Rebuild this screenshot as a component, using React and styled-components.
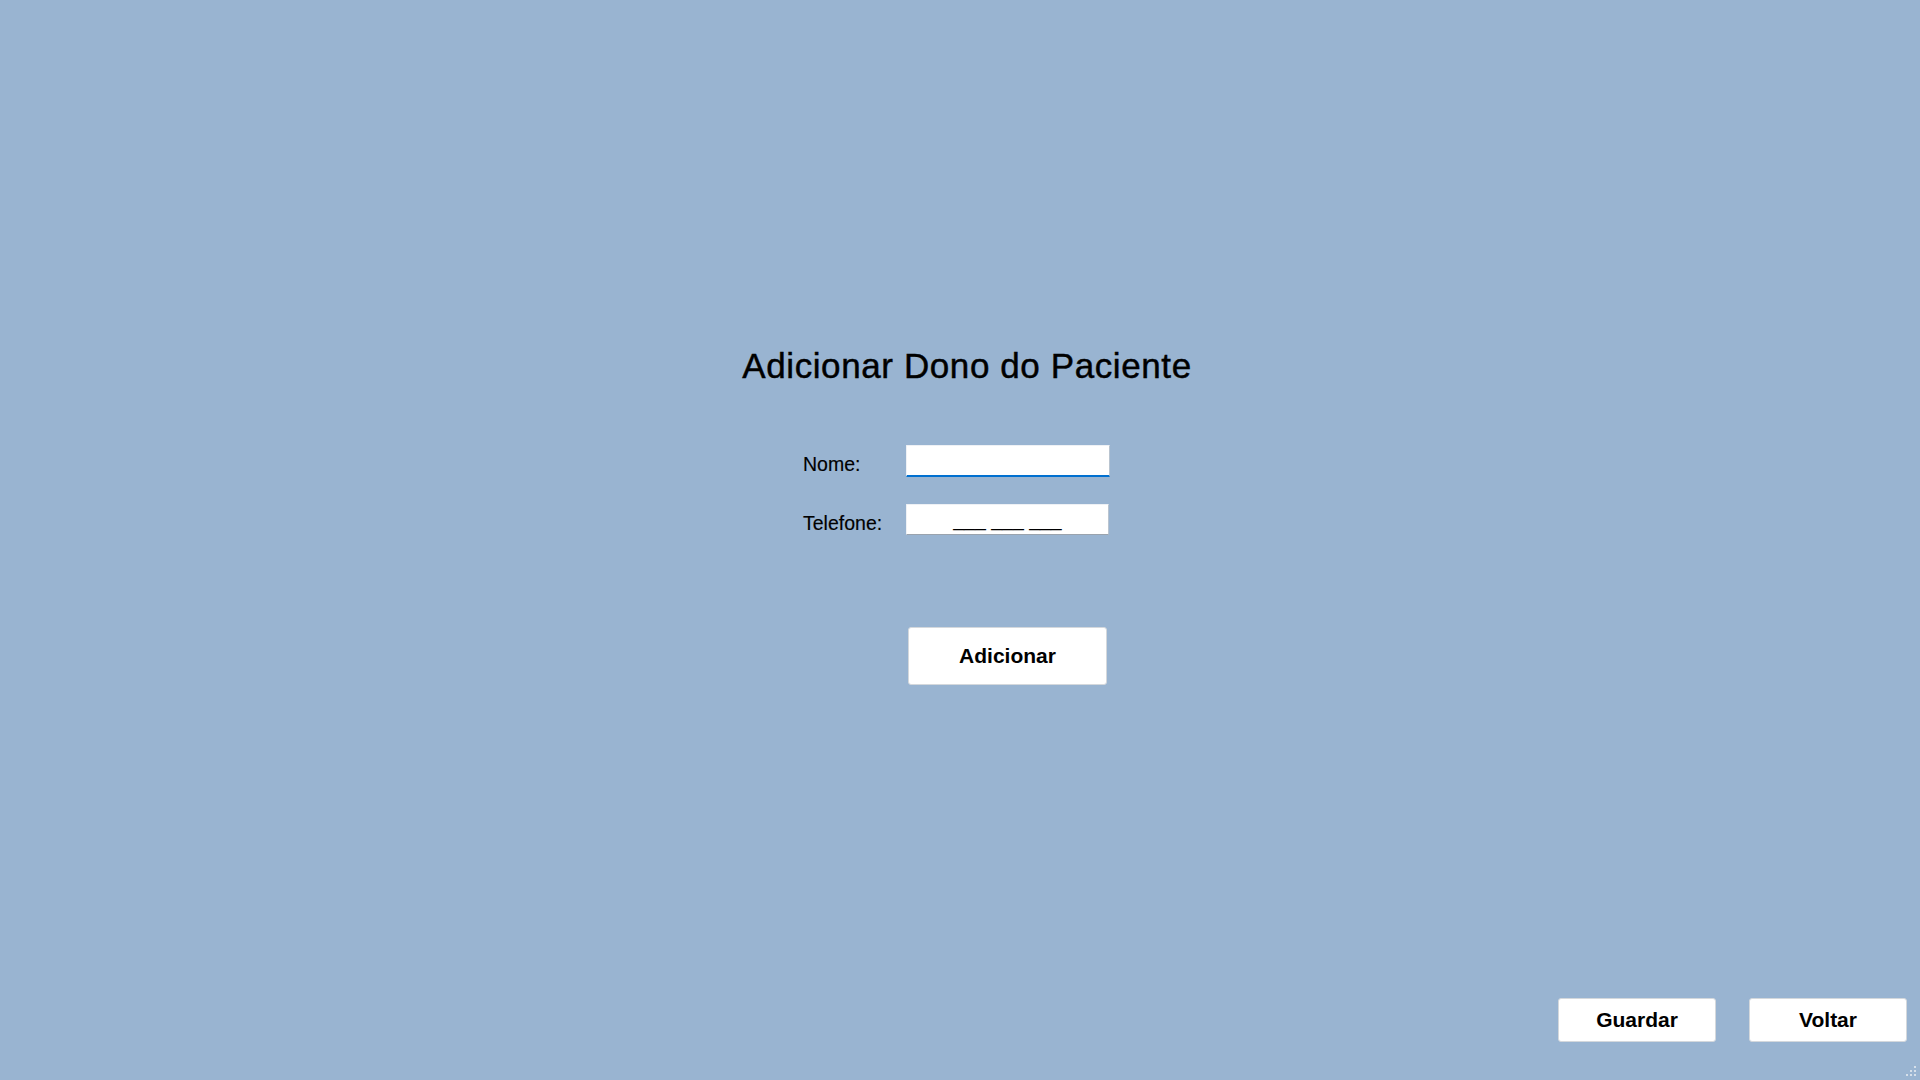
import React from "react";
import styled, { createGlobalStyle } from "styled-components";

const GlobalStyle = createGlobalStyle`
  html, body {
    margin: 0;
    padding: 0;
    background: #99b4d1;
  }
  body {
    font-family: "Liberation Sans", Arial, sans-serif;
    color: #000;
  }
  * { box-sizing: border-box; }
`;

const Page = styled.div`
  position: relative;
  min-height: 100vh;
  display: flex;
  flex-direction: column;
  background: #99b4d1;
`;

const Main = styled.main`
  padding-top: 346px;
  display: flex;
  justify-content: center;
`;

const Panel = styled.section`
  width: 480px;
  display: flex;
  flex-direction: column;
`;

const Title = styled.h1`
  margin: 0;
  padding-left: 14px;
  text-align: center;
  font-size: 35px;
  line-height: 40px;
  font-weight: 400;
  letter-spacing: 0.6px;
  -webkit-text-stroke: 0.45px #000;
  white-space: nowrap;
`;

const Form = styled.div`
  margin-top: 59px;
  padding-left: 83px;
  display: grid;
  grid-template-columns: 103px 204px;
  grid-auto-rows: auto;
  row-gap: 27px;
`;

const Label = styled.label`
  height: 32px;
  font-size: 19.5px;
  line-height: 32px;
  padding-top: 3px;
  white-space: nowrap;
  -webkit-text-stroke: 0.15px #000;
`;

const Field = styled.input`
  width: ${(p) => p.$w || 204}px;
  height: ${(p) => p.$h || 32}px;
  margin: 0;
  padding: 0 4px;
  background: #fff;
  border: 1px solid #eef1f5;
  border-right-color: #b9c4d0;
  border-bottom: ${(p) => (p.$focused ? "2px solid #0070d0" : "1px solid #9aa3ad")};
  border-radius: 1px;
  font-family: "Liberation Sans", Arial, sans-serif;
  font-size: 19.5px;
  color: #000;
  text-align: ${(p) => (p.$center ? "center" : "left")};
  outline: none;
`;

const Button = styled.button`
  width: ${(p) => p.$w}px;
  height: ${(p) => p.$h}px;
  margin: 0;
  padding: 0;
  background: #fff;
  border: 1px solid #d4d8dc;
  border-radius: 3px;
  font-family: "Liberation Sans", Arial, sans-serif;
  font-weight: 700;
  font-size: 21px;
  color: #000;
  cursor: pointer;
`;

const AddButton = styled(Button)`
  grid-column: 2;
  margin-top: 64px;
  margin-left: 2px;
`;

const Footer = styled.footer`
  margin-top: auto;
  display: flex;
  justify-content: flex-end;
  gap: 33px;
  padding: 0 13px 38px 0;
`;

const Grip = styled.svg`
  position: absolute;
  right: 3px;
  bottom: 3px;
  width: 12px;
  height: 12px;
`;

export default function App() {
  const dots = [
    [9, 1],
    [5, 5],
    [9, 5],
    [1, 9],
    [5, 9],
    [9, 9],
  ];
  return (
    <>
      <GlobalStyle />
      <Page>
        <Main>
          <Panel>
            <Title>Adicionar Dono do Paciente</Title>
            <Form>
              <Label htmlFor="nome">Nome:</Label>
              <Field id="nome" $focused />
              <Label htmlFor="tel">Telefone:</Label>
              <Field id="tel" $w={203} $h={31} $center defaultValue="___ ___ ___" />
              <AddButton $w={199} $h={58}>Adicionar</AddButton>
            </Form>
          </Panel>
        </Main>
        <Footer>
          <Button $w={158} $h={44}>Guardar</Button>
          <Button $w={158} $h={44}>Voltar</Button>
        </Footer>
        <Grip viewBox="0 0 12 12">
          {dots.map(([x, y], i) => (
            <rect key={i} x={x} y={y} width="2" height="2" fill="#d6e0ea" />
          ))}
        </Grip>
      </Page>
    </>
  );
}
